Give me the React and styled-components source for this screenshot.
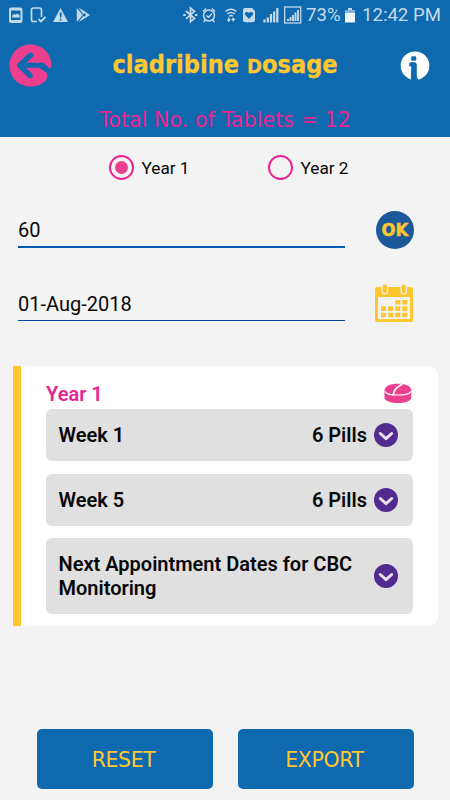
import React, {useState} from "react";
import styled, {createGlobalStyle} from "styled-components";

const COLORS = {
    BLUE: "#0f69af",
    YELLOW: "#ffc72f",
    PINK: "#ec3f8f",
    MAGENTA: "#eb2494",
    PURPLE: "#512b90",
    STATUS: "#c3daeb",
    PAGE: "#f3f3f3",
}

const plans = [
    {title: "Week 1", amount: "6 Pills"},
    {title: "Week 5", amount: "6 Pills"},
    {title: "Next Appointment Dates for CBC Monitoring", tall: true},
]

const App = () => {

    const [year, setYear] = useState(1);

    return (
        <Screen>
            <GlobalStyle/>
            <Header>
                <StatusBar>
                    <StatusLeftIcons/>
                    <StatusRightIcons/>
                    <StatusText $width={39} $gap={4}>73%</StatusText>
                    <BatteryIcon/>
                    <StatusText $width={79} $gap={7}>12:42 PM</StatusText>
                </StatusBar>
                <TitleBar>
                    <IconButton aria-label="Back"><BackIcon/></IconButton>
                    <Title>cladribine <TitleSmallCap>D</TitleSmallCap>osage</Title>
                    <IconButton aria-label="Info"><InfoIcon/></IconButton>
                </TitleBar>
                <Total>Total No. of Tablets = 12</Total>
            </Header>
            <YearSelect>
                {[1, 2].map(value => (
                    <YearOption key={value} onClick={() => setYear(value)}>
                        <Radio>{year === value && <RadioDot/>}</Radio>
                        Year {value}
                    </YearOption>
                ))}
            </YearSelect>
            <Form>
                <FieldRow>
                    <Field $active>60</Field>
                    <OkButton><OkLabel>OK</OkLabel></OkButton>
                </FieldRow>
                <FieldRow>
                    <Field>01-Aug-2018</Field>
                    <CalendarButton><CalendarIcon/></CalendarButton>
                </FieldRow>
            </Form>
            <Card>
                <CardHeader>
                    <CardTitle>Year 1</CardTitle>
                    <PillIcon/>
                </CardHeader>
                <PlanList>
                    {plans.map(plan => (
                        <PlanItem key={plan.title} $tall={plan.tall}>
                            <PlanTitle>{plan.title}</PlanTitle>
                            {plan.amount && <PlanAmount>{plan.amount}</PlanAmount>}
                            <ChevronIcon/>
                        </PlanItem>
                    ))}
                </PlanList>
            </Card>
            <Footer>
                <ActionButton>RESET</ActionButton>
                <ActionButton>EXPORT</ActionButton>
            </Footer>
        </Screen>
    )
}

const StatusLeftIcons = () => (
    <StatusLeftSvg width="84" height="18" viewBox="8 6 84 18" fill={COLORS.STATUS}>
        <path fillRule="evenodd" d="M11 7.500h9.500q2 0 2 2v11.500q0 2-2 2H11q-2 0-2-2v-11.500q0-2 2-2zm0 3v9.500h9.500V10.500zm1.200 7v-2l2-1.500 1.500.8 1.500-1.300 2.500 2v2z"/>
        <path d="M37 21.500H33.500q-2 0-2-2V10q0-2 2-2H39.500q2 0 2 2v7" fill="none" stroke={COLORS.STATUS} strokeWidth="1.700"/>
        <path d="M38.500 19l2.500 2.500 4.500-4.500" fill="none" stroke={COLORS.STATUS} strokeWidth="1.800"/>
        <path fillRule="evenodd" d="M60.500 8l7.500 14H53zM59.600 12.500l.4 5h1.300l.4-5zM59.700 18.700v1.700h1.700v-1.700z"/>
        <path d="M76.800 8l6 7-6 7zM78.500 7.800l7 4-2 2.400zM84.500 13l1-1 4.500 3-4.500 3-1-1 1.500-2zM78.500 22l7-4-2-2.300z"/>
    </StatusLeftSvg>
)

const StatusRightIcons = () => (
    <svg width="120" height="20" viewBox="182 5 120 20" fill="none" stroke={COLORS.STATUS}>
        <path d="M186 11l8.500 7.500-4 3.300V8l4 3.300-8.500 7.500" strokeWidth="1.700"/>
        <path d="M183.300 15h2.400M195 15h2.400" strokeWidth="2.200"/>
        <circle cx="209" cy="15.500" r="5.500" strokeWidth="1.500"/>
        <path d="M206.500 15.500l2 1.800 3.500-3.500M203 11.500l3-3M215 11.500l-3-3M205.500 20l-2 2M212.500 20l2 2" strokeWidth="1.500"/>
        <path d="M225.500 11.500q5.500-4.500 11 0M227 14q4-3 8 0M229 16.200q2-1.400 4 0" strokeWidth="1.400"/>
        <path d="M228.800 17.500v3M233.300 18v3.500" strokeWidth="1.500"/>
        <path d="M226.600 19.600h4.400l-2.200 2.600zM231.100 20h4.400l-2.200-2.600z" fill={COLORS.STATUS} stroke="none"/>
        <path fillRule="evenodd" fill={COLORS.STATUS} stroke="none" d="M243 10q0-2 2-2h7l3 3v9q0 2.300-2.300 2.300h-7.400Q243 22.300 243 20zM249 19l3.800-4q1.200-3-1.700-3-1.400 0-2.100 1-.7-1-2.100-1-2.900 0-1.700 3z"/>
        <path d="M264.500 22.500v-3M267.800 22.500v-5M271 22.500V14M274.200 22.500v-11M277.300 22.500V8" strokeWidth="2.200"/>
        <rect x="284.700" y="7" width="16" height="16" strokeWidth="1.300"/>
        <path d="M288 21v-2M290.500 21v-4M293 21v-6M295.500 21v-8.500M298 21V10" strokeWidth="1.900"/>
    </svg>
)

const BatteryIcon = () => (
    <svg width="10" height="16" viewBox="0 0 10 16" fill={COLORS.STATUS}>
        <path d="M3 1h4v2H3z"/>
        <path d="M0 3h10v4H0z" opacity=".65"/>
        <path d="M0 6h10v9.500H0z" fill="#edf4f9"/>
    </svg>
)

const BackIcon = () => (
    <svg width="43" height="43" viewBox="0 0 43 43">
        <path
            fill={COLORS.PINK}
            d="M21.500.5C9.700.5.500 9.700.500 21.500S9.700 42.500 21.500 42.500c7 0 12.500-2.500 15.500-6.500 1.500-2 1.500-4.500.800-7L30.500 24l3.500-4.500 5 5q3.500.5 3.500-3C42.500 9.500 33 .5 21.500.5z"
        />
        <path
            d="M21.500 11.300L10.800 21.300 21 31.500"
            fill="none"
            stroke={COLORS.BLUE}
            strokeWidth="5.500"
            strokeLinecap="round"
            strokeLinejoin="round"
        />
        <path d="M11 18.700h22.500q1 0 2 1l4.500 4-2.200 4-1.800-2.700q-1-1.300-2.500-1.300H11z" fill={COLORS.BLUE}/>
    </svg>
)

const InfoIcon = () => (
    <svg width="30" height="30" viewBox="0 0 30 30">
        <circle cx="15" cy="14.700" r="14.300" fill="#fff"/>
        <rect x="11.200" y="5.200" width="5" height="4.500" rx="1.200" fill={COLORS.BLUE}/>
        <path d="M9.200 12.200q1.500-1.200 4-1.200 3.600 0 3.600 3.300v11q0 2 1.700 3.300l-3 1.400-3.500-.2-1.200-2 .5-12.600q-1.300 0-2.100.4z" fill={COLORS.BLUE}/>
    </svg>
)

const CalendarIcon = () => (
    <svg width="40" height="40" viewBox="0 0 40 40" fill={COLORS.YELLOW}>
        <path fillRule="evenodd" d="M3 4h34q2 0 2 2v31q0 2-2 2H3q-2 0-2-2V6q0-2 2-2zm1 10v22h32V14z"/>
        <rect x="8" y=".8" width="5.500" height="10" rx="2.500" stroke={COLORS.PAGE} strokeWidth="1.200"/>
        <rect x="27" y=".8" width="5.500" height="10" rx="2.500" stroke={COLORS.PAGE} strokeWidth="1.200"/>
        <path d="M21.300 17h5v4.500h-5zM28.300 17h5v4.500h-5zM7 23.300h5v4.700H7zM14.200 23.300h5v4.700h-5zM21.300 23.300h5v4.700h-5zM28.300 23.300h5v4.700h-5zM7 29.700h5v4.500H7zM14.200 29.700h5v4.500h-5zM21.300 29.700h5v4.500h-5zM28.300 29.700h5v4.500h-5z"/>
    </svg>
)

const PillIcon = () => (
    <svg width="28" height="21" viewBox="0 0 28 21">
        <path d="M.5 7.500C.5 3.500 6 .8 14 .8s13.300 2.700 13.300 6.700v7c0 3.500-6 5.500-13.300 5.500S.5 18 .5 14.500z" fill={COLORS.PINK}/>
        <path d="M.7 8.200c2 5.100 24.400 5.100 26.400 0" fill="none" stroke="#fff" strokeWidth="1.100"/>
        <path d="M18.500 1C13 4 10 6.500 9 12.300" fill="none" stroke="#fff" strokeWidth="1.700"/>
    </svg>
)

const ChevronIcon = () => (
    <svg width="24" height="24" viewBox="0 0 24 24">
        <circle cx="12" cy="12" r="12" fill={COLORS.PURPLE}/>
        <path d="M6.300 10.500l5.700 5.200 5.700-5.200" fill="none" stroke="#e7e2ec" strokeWidth="3" strokeLinecap="round" strokeLinejoin="round"/>
    </svg>
)

const GlobalStyle = createGlobalStyle`
    * {
        box-sizing: border-box;
    }
    body {
        margin: 0;
        background: ${COLORS.PAGE};
    }
    button {
        padding: 0;
        border: 0;
        background: none;
    }
    svg {
        display: block;
        flex-shrink: 0;
    }
`

const Screen = styled.main`
    width: 450px;
    height: 800px;
    display: flex;
    flex-direction: column;
    background: ${COLORS.PAGE};
    color: #080808;
    font-family: Roboto, sans-serif;
    white-space: nowrap;
    overflow: hidden;
`

const Header = styled.header`
    height: 137px;
    background: ${COLORS.BLUE};
`

const StatusBar = styled.div`
    height: 30px;
    padding-right: 9px;
    display: flex;
    align-items: center;
    justify-content: flex-end;
`

const StatusLeftSvg = styled.svg`
    margin: 0 auto 0 8px;
`

const StatusText = styled.span`
    width: ${({$width}) => $width}px;
    margin-left: ${({$gap}) => $gap}px;
    color: ${COLORS.STATUS};
    font-size: 18.6px;
    line-height: 30px;
`

const TitleBar = styled.div`
    height: 72px;
    padding: 0 20px 0 8.5px;
    display: flex;
    align-items: center;
    justify-content: space-between;
`

const IconButton = styled.button`
    padding-bottom: 1px;
`

const Title = styled.h1`
    width: 240px;
    margin: 0 0 1px;
    color: ${COLORS.YELLOW};
    font: bold 24.5px/32px "DejaVu Sans", sans-serif;
    -webkit-text-stroke: .3px ${COLORS.YELLOW};
    transform: translateX(-1px) scaleX(.922);
    display: flex;
    align-items: baseline;
    justify-content: center;
    white-space: pre;
`

const TitleSmallCap = styled.span`
    font-size: 19.5px;
`

const Total = styled.p`
    margin: 0;
    padding-top: 5px;
    color: ${COLORS.MAGENTA};
    font: 20.5px/26px "DejaVu Sans", sans-serif;
    letter-spacing: .1px;
    text-align: center;
`

const YearSelect = styled.div`
    height: 61px;
    padding-left: 108.5px;
    display: flex;
    align-items: center;
`

const YearOption = styled.div`
    width: 159px;
    display: flex;
    align-items: center;
    gap: 8px;
    font-size: 17.2px;
`

const Radio = styled.span`
    width: 25px;
    height: 25px;
    display: flex;
    align-items: center;
    justify-content: center;
    border: 2px solid ${COLORS.MAGENTA};
    border-radius: 50%;
`

const RadioDot = styled.span`
    width: 13px;
    height: 13px;
    border-radius: 50%;
    background: ${COLORS.PINK};
`

const Form = styled.section`
    height: 168px;
    padding: 13px 35px 0 18px;
    display: flex;
    flex-direction: column;
    gap: 35px;
`

const FieldRow = styled.div`
    height: 38px;
    display: flex;
    justify-content: space-between;
    align-items: center;
`

const Field = styled.div`
    width: 327px;
    height: ${({$active}) => $active ? 36 : 35}px;
    padding-top: 6px;
    border-bottom: ${({$active}) => $active ? "2px solid #0059b3" : "1px solid #0742a0"};
    font-size: 20px;
    line-height: 24px;
`

const OkButton = styled.button`
    width: 38px;
    height: 38px;
    margin-right: 1px;
    display: flex;
    align-items: center;
    justify-content: center;
    border-radius: 50%;
    background: #1d5998;
    color: ${COLORS.YELLOW};
    font: bold 17px/20px "DejaVu Sans", sans-serif;
`

const OkLabel = styled.span`
    -webkit-text-stroke: .5px ${COLORS.YELLOW};
    transform: scaleX(.97);
`

const CalendarButton = styled.button`
    margin-right: 1px;
`

const Card = styled.section`
    height: 259.5px;
    margin: 0 12.5px;
    padding: 15px 25px 0;
    border-left: 8.5px solid ${COLORS.YELLOW};
    border-radius: 0 9px 9px 0;
    background: #fff;
`

const CardHeader = styled.div`
    height: 28px;
    display: flex;
    justify-content: space-between;
    align-items: flex-start;
    padding: 2px 1px 0 .5px;
`

const CardTitle = styled.h2`
    margin: 0;
    color: ${COLORS.MAGENTA};
    font-size: 20px;
    font-weight: 600;
    line-height: 23px;
`

const PlanList = styled.div`
    display: flex;
    flex-direction: column;
    gap: 12.5px;
`

const PlanItem = styled.div`
    height: ${({$tall}) => $tall ? 75.5 : 52}px;
    padding: 0 14.5px 0 13px;
    display: flex;
    align-items: center;
    border-radius: 6px;
    background: #e0e0e0;
    font-size: 20px;
    font-weight: 600;
    line-height: 24px;
`

const PlanTitle = styled.span`
    flex: 1;
    white-space: normal;
`

const PlanAmount = styled.span`
    margin-right: 7px;
`

const Footer = styled.footer`
    margin-top: auto;
    padding: 0 36.5px 11.5px;
    display: flex;
    justify-content: space-between;
`

const ActionButton = styled.button`
    width: 176px;
    height: 59.5px;
    padding: 2px 2px 0 0;
    border-radius: 5px;
    background: ${COLORS.BLUE};
    color: ${COLORS.YELLOW};
    font: 20.5px "DejaVu Sans", sans-serif;
    letter-spacing: -.4px;
`

export default App;
